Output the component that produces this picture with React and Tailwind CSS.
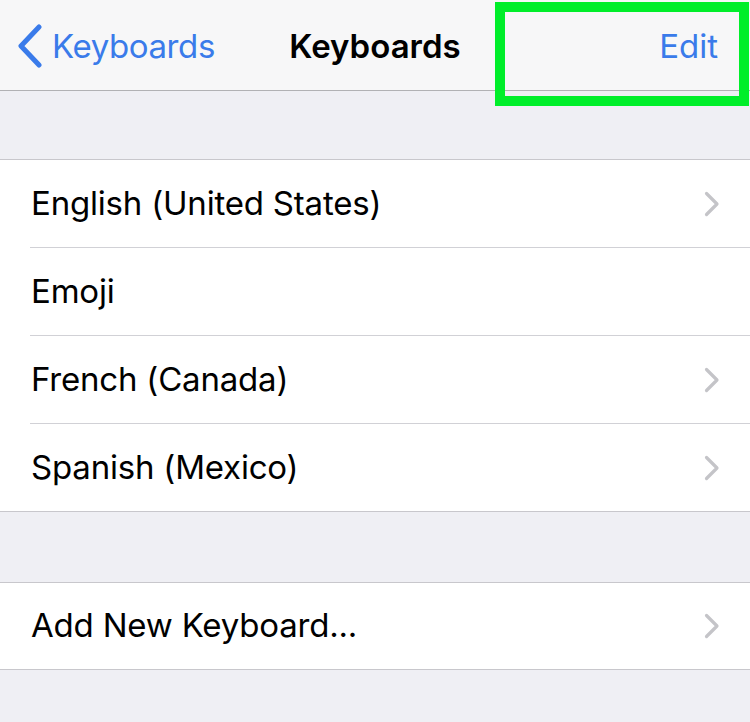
import React from 'react';

const Chevron = () => (
  <svg width="16" height="26" viewBox="0 0 16 26" className="shrink-0">
    <path d="M2.5 2.5 L13 13 L2.5 23.5" fill="none" stroke="#c4c4c8" strokeWidth="3.2" strokeLinecap="round" strokeLinejoin="round" />
  </svg>
);

const Row = ({ label, last = false, chevron = true, h = 'h-[88px]' }) => (
  <div className="pl-[30px] bg-white">
    <div className={`${h} flex items-center justify-between pr-[30px] ${last ? '' : 'border-b border-[#d1d1d6]'}`}>
      <span className="ml-px text-[33px] text-black tracking-[-0.2px]">{label}</span>
      {chevron && <Chevron />}
    </div>
  </div>
);

export default function App() {
  const keyboards = [
    { label: 'English (United States)' },
    { label: 'Emoji', chevron: false },
    { label: 'French (Canada)' },
    { label: 'Spanish (Mexico)' },
  ];

  return (
    <div className="relative w-[750px] h-[722px] overflow-hidden bg-[#efeff4] font-['Inter',sans-serif]">
      {/* Nav bar */}
      <div className="relative h-[91px] pt-[3px] bg-[#f7f7f8] border-b border-[#b1b1b4] flex items-center">
        <div className="flex items-center pl-[17px] text-[#3a7bea]">
          <svg width="26" height="44" viewBox="0 0 26 44" className="-mt-[2px]">
            <path d="M22 3 L4 22 L22 41" fill="none" stroke="currentColor" strokeWidth="5" strokeLinecap="round" strokeLinejoin="round" />
          </svg>
          <span className="ml-[9px] text-[33px] tracking-[-0.4px]">Keyboards</span>
        </div>
        <span className="absolute left-0 right-0 text-center text-[33px] font-semibold text-black pointer-events-none">
          Keyboards
        </span>
        <span className="ml-auto pr-[32px] text-[33px] text-[#3a7bea]">Edit</span>
      </div>

      <div className="h-[68px]" />

      <div className="border-y border-[#c8c7cc]">
        {keyboards.map((k, i) => {
          const last = i === keyboards.length - 1;
          return (
            <Row key={k.label} label={k.label} chevron={k.chevron !== false} last={last} h={last ? 'h-[87px]' : 'h-[88px]'} />
          );
        })}
      </div>

      <div className="h-[70px]" />

      <div className="border-y border-[#c8c7cc]">
        <Row label="Add New Keyboard..." last h="h-[86px]" />
      </div>

      {/* highlight box */}
      <div className="absolute left-[495px] top-[2px] w-[254px] h-[104px] border-[10px] border-[#00ee2a]" />
    </div>
  );
}
